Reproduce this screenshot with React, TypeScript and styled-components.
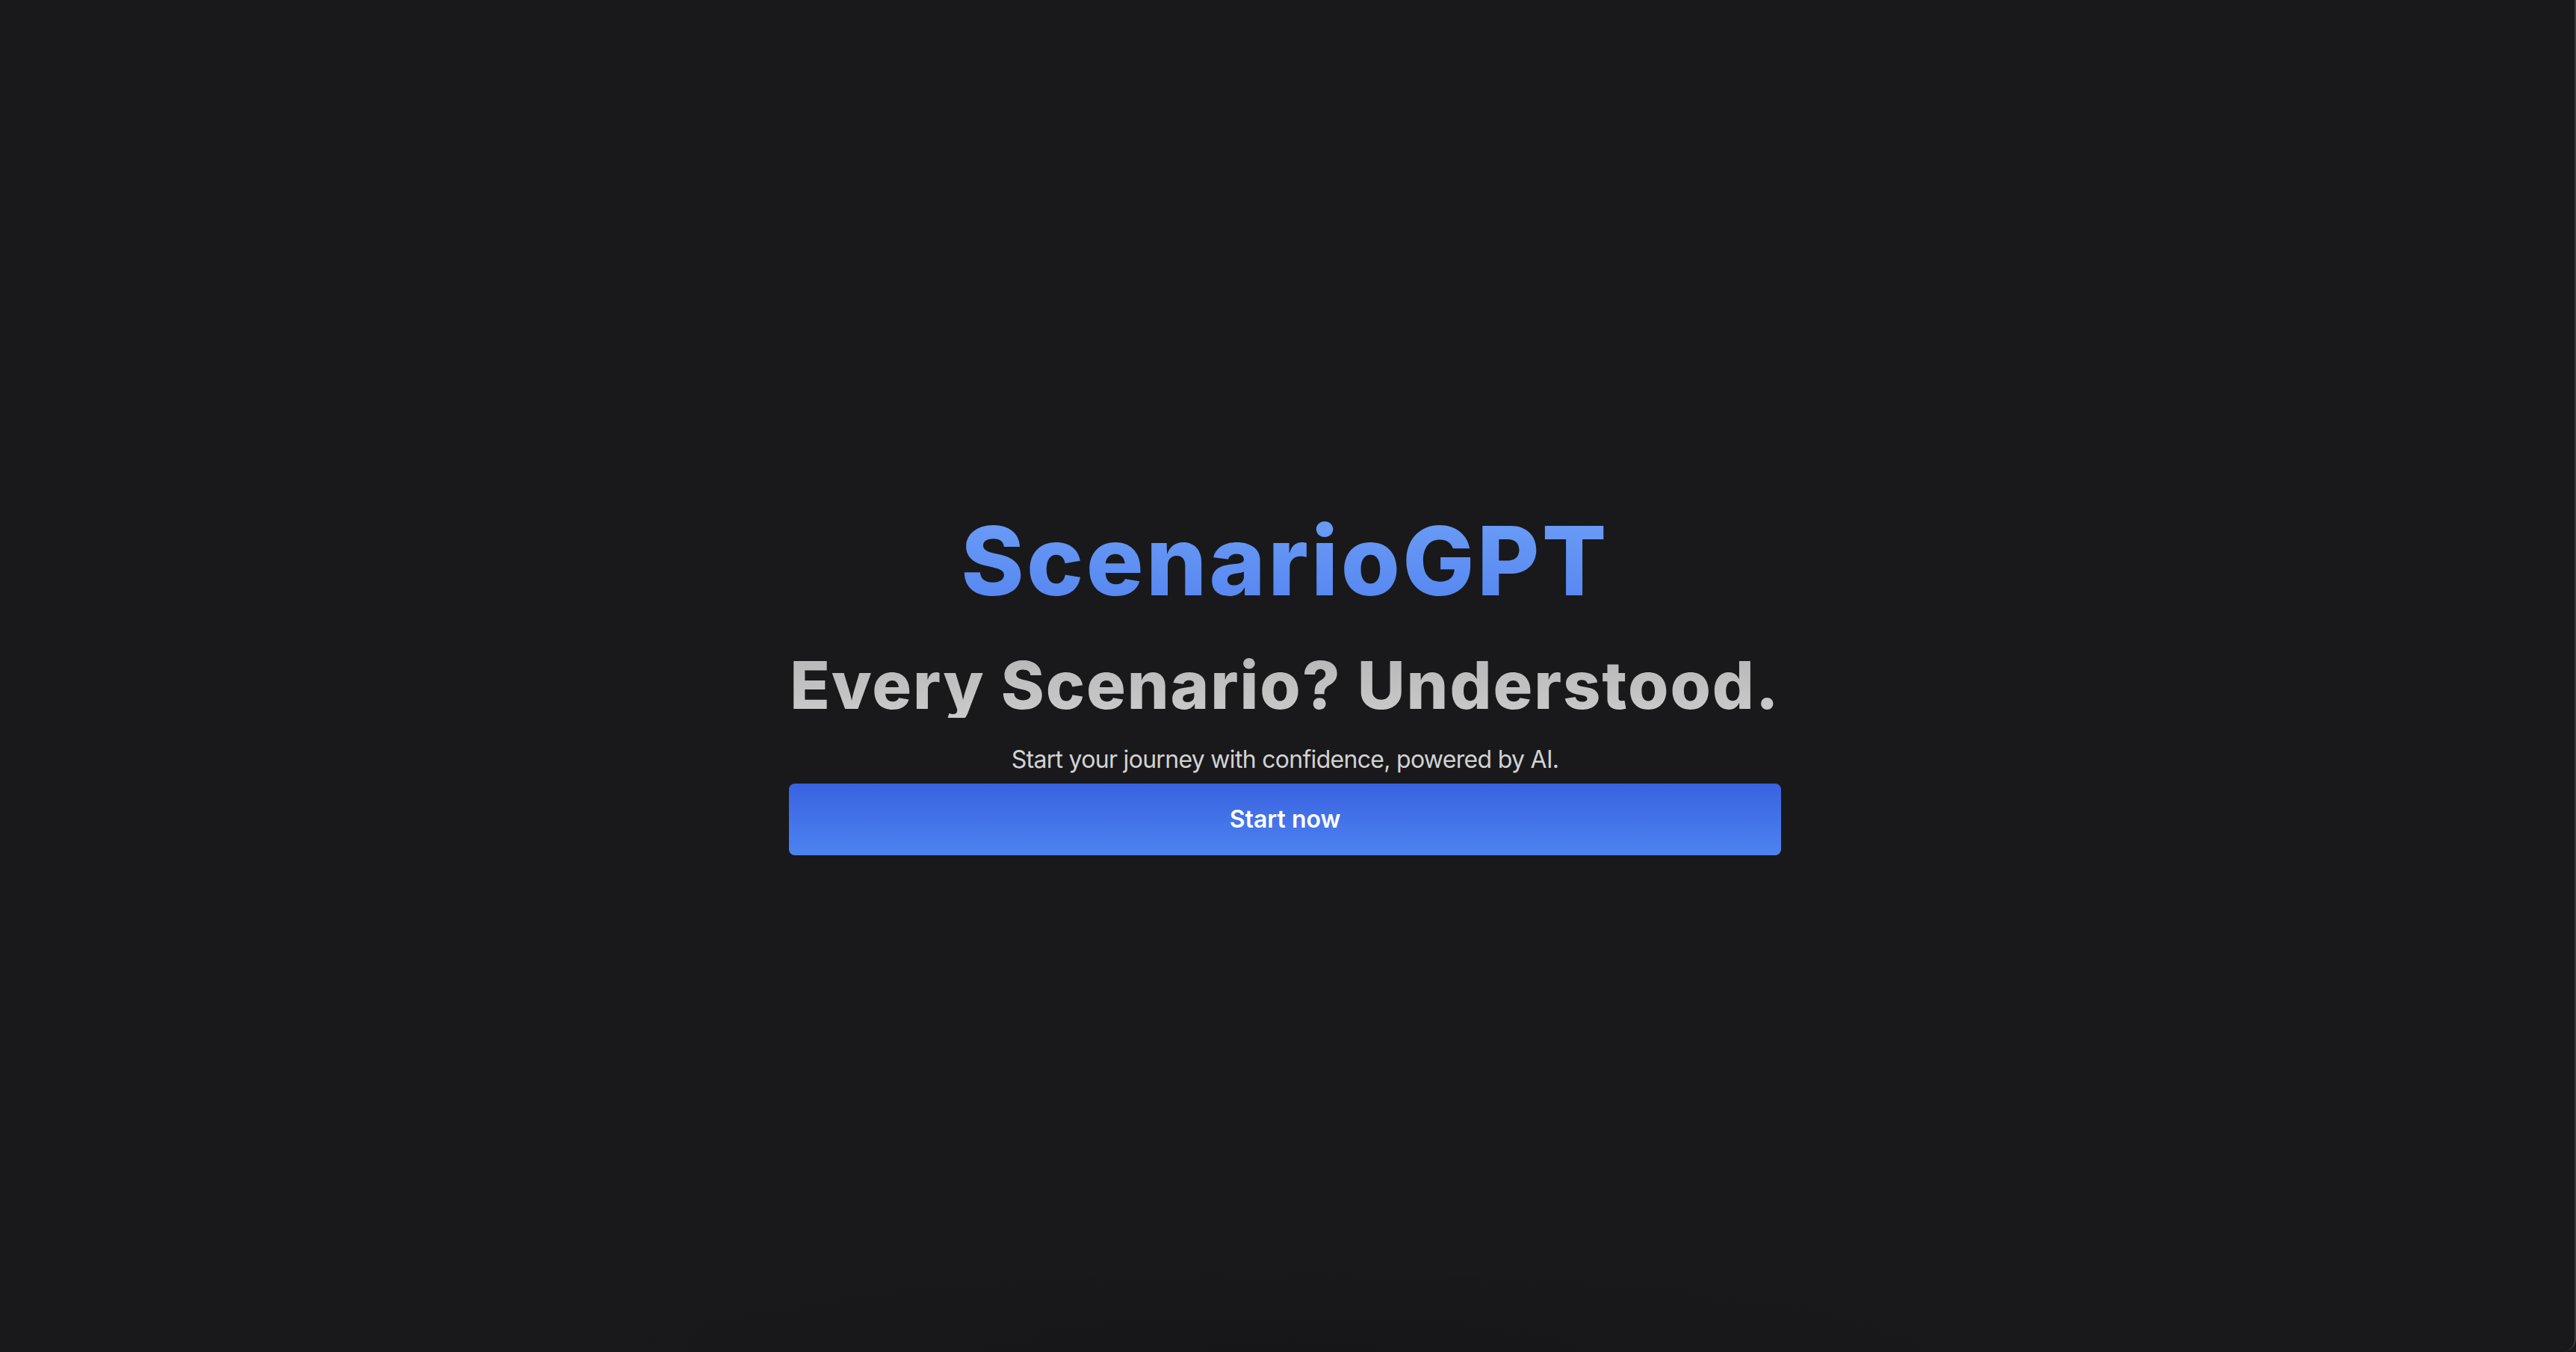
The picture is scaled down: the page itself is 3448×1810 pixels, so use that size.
import React from "react";
import styled, { createGlobalStyle } from "styled-components";

const GlobalStyle = createGlobalStyle`
  html, body {
    margin: 0;
    padding: 0;
    background: #19191b;
    height: 100%;
  }
  #root {
    height: 100%;
  }
  * { box-sizing: border-box; }
`;

const Frame = styled.div`
  min-height: 100vh;
  background:
    radial-gradient(ellipse 1000px 120px at 50% 100%, rgba(10, 10, 12, 0.18), rgba(10, 10, 12, 0) 100%),
    #19191b;
  border-right: 2px solid #3b3b3d;
  border-bottom-right-radius: 18px;
  border-bottom-left-radius: 18px;
  display: flex;
  flex-direction: column;
  align-items: center;
  justify-content: center;
  padding-top: 21px;
  padding-right: 6px;
  font-family: Inter, "Noto Sans", sans-serif;
`;

const Hero = styled.main`
  width: 1328px;
  display: flex;
  flex-direction: column;
  align-items: center;
  text-align: center;
`;

const Brand = styled.h1`
  margin: 0;
  font-family: Inter, "Noto Sans", sans-serif;
  font-weight: 800;
  font-size: 128px;
  line-height: 1;
  letter-spacing: 3.4px;
  white-space: nowrap;
  background: linear-gradient(180deg, #6b9df6 0%, #5585f0 100%);
  -webkit-background-clip: text;
  background-clip: text;
  color: transparent;
`;

const Tagline = styled.h2`
  margin: 58px 0 0;
  font-family: Inter, "Noto Sans", sans-serif;
  font-weight: 800;
  font-size: 88px;
  line-height: 1;
  letter-spacing: 1.9px;
  white-space: nowrap;
  background: linear-gradient(180deg, #b6b6b6 0%, #cbcbcb 100%);
  -webkit-background-clip: text;
  background-clip: text;
  color: transparent;
`;

const Lead = styled.p`
  margin: 32px 0 0;
  font-size: 32px;
  line-height: 48px;
  font-weight: 400;
  letter-spacing: -0.7px;
  white-space: nowrap;
  color: #d2d2d2;
`;

const CTA = styled.button`
  margin-top: 8px;
  width: 100%;
  height: 96px;
  border: none;
  border-radius: 8px;
  background: linear-gradient(180deg, #3962e0 0%, #4d83f0 100%);
  color: #ffffff;
  font-family: Inter, "Noto Sans", sans-serif;
  font-weight: 600;
  font-size: 32px;
  cursor: pointer;
  display: flex;
  align-items: center;
  justify-content: center;
`;

export default function App() {
  return (
    <>
      <GlobalStyle />
      <Frame>
        <Hero>
          <Brand>ScenarioGPT</Brand>
          <Tagline>Every Scenario? Understood.</Tagline>
          <Lead>Start your journey with confidence, powered by AI.</Lead>
          <CTA>Start now</CTA>
        </Hero>
      </Frame>
    </>
  );
}
